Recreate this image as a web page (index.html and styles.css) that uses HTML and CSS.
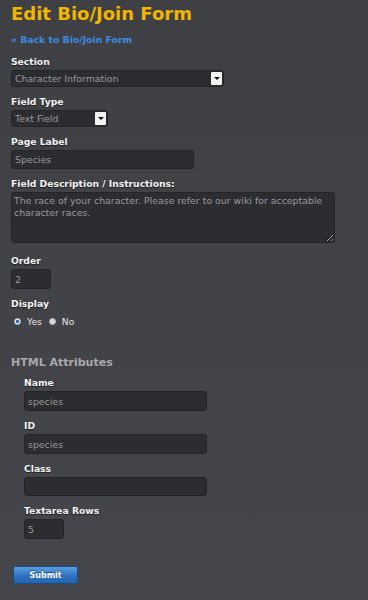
FILE: index.html
```html
<!DOCTYPE html>
<html lang="en">
<head>
  <meta charset="UTF-8">
  <meta name="viewport" content="width=device-width, initial-scale=1.0">
  <title>Edit Bio/Join Form</title>
  <link rel="stylesheet" href="styles.css">
</head>
<body>
  <div class="page">
    <!-- Heading -->
    <h1>Edit Bio/Join Form</h1>
    <a class="back-link" href="#">&laquo; Back to Bio/Join Form</a>

    <form class="field-form">
      <div class="form-group">
        <label for="section">Section</label>
        <div class="select-wrap select-wide">
          <select id="section">
            <option>Character Information</option>
          </select>
          <span class="select-arrow"></span>
        </div>
      </div>

      <div class="form-group">
        <label for="fieldType">Field Type</label>
        <div class="select-wrap select-short">
          <select id="fieldType">
            <option>Text Field</option>
          </select>
          <span class="select-arrow"></span>
        </div>
      </div>

      <div class="form-group">
        <label for="pageLabel">Page Label</label>
        <input type="text" id="pageLabel" class="input-medium" value="Species">
      </div>

      <div class="form-group form-group-wide">
        <label for="description">Field Description / Instructions:</label>
        <textarea id="description" class="input-large">The race of your character. Please refer to our wiki for acceptable character races.</textarea>
      </div>

      <div class="form-group">
        <label for="order">Order</label>
        <input type="text" id="order" class="input-mini input-tall" value="2">
      </div>

      <div class="form-group">
        <label>Display</label>
        <div class="radio-row">
          <label class="radio"><input type="radio" name="display" checked> Yes</label>
          <label class="radio"><input type="radio" name="display"> No</label>
        </div>
      </div>

      <!-- HTML attributes -->
      <h2>HTML Attributes</h2>
      <div class="attributes">
        <div class="form-group">
          <label for="attrName">Name</label>
          <input type="text" id="attrName" class="input-medium input-tall" value="species">
        </div>
        <div class="form-group">
          <label for="attrId">ID</label>
          <input type="text" id="attrId" class="input-medium input-tall" value="species">
        </div>
        <div class="form-group">
          <label for="attrClass">Class</label>
          <input type="text" id="attrClass" class="input-medium" value="">
        </div>
        <div class="form-group">
          <label for="attrRows">Textarea Rows</label>
          <input type="text" id="attrRows" class="input-mini input-tall" value="5">
        </div>
      </div>

      <button type="submit" class="submit-button">Submit</button>
    </form>
  </div>
</body>
</html>
```

FILE: styles.css
```css
html,
body {
  margin: 0;
  padding: 0;
  height: 100%;
}

body {
  font-family: 'DejaVu Sans', Verdana, sans-serif;
  font-size: 9px;
  color: #eee;
  background: linear-gradient(180deg, #3f4044, #45464b);
}

.page {
  padding: 3px 11px 0;
}

h1 {
  margin: 0;
  font-size: 18px;
  font-weight: bold;
  color: #f2b600;
  line-height: 22px;
}

.back-link {
  display: block;
  margin-top: 9px;
  font-size: 9.3px;
  font-weight: bold;
  color: #3b8de2;
  text-decoration: none;
}

.field-form {
  margin-top: 11px;
}

.form-group {
  margin-bottom: 9px;
}

.form-group-wide {
  margin-bottom: 12px;
}

.form-group > label {
  display: block;
  margin-bottom: 3px;
  font-size: 9.2px;
  font-weight: bold;
  color: #f4f4f4;
  text-shadow: 0 1px 1px #1c1c1c;
}

input[type="text"],
select,
textarea {
  box-sizing: border-box;
  font-family: 'DejaVu Sans', Verdana, sans-serif;
  font-size: 9.4px;
  color: #9a9a9a;
  background: #2b2d31;
  border: 1px solid #242528;
  border-radius: 3px;
  padding: 0 3px;
  outline: none;
}

input[type="text"] {
  height: 19px;
}

input.input-tall {
  height: 20px;
}

.input-medium {
  width: 183px;
}

.input-mini {
  width: 40px;
}

.input-large {
  display: block;
  width: 324px;
  height: 51px;
  padding: 2px 2px;
  line-height: 12px;
}

.select-wrap {
  position: relative;
  height: 17px;
}

.select-wide {
  width: 213px;
}

.select-short {
  width: 97px;
}

.select-wrap select {
  appearance: none;
  width: 100%;
  height: 100%;
}

.select-arrow {
  position: absolute;
  top: 2px;
  right: 2px;
  width: 11px;
  height: 13px;
  background: #f2f2f2;
  border-radius: 1px;
  pointer-events: none;
}

.select-arrow::after {
  content: "";
  position: absolute;
  left: 3px;
  top: 5px;
  border-left: 3px solid transparent;
  border-right: 3px solid transparent;
  border-top: 3px solid #111;
}

.radio-row {
  display: flex;
  align-items: center;
  gap: 7px;
  padding: 4px 0 0 3px;
}

.radio {
  display: flex;
  align-items: center;
  gap: 4px;
  font-size: 9.2px;
  color: #e4e4e4;
}

.radio input {
  appearance: none;
  margin: 0 2px 0 0;
  width: 7px;
  height: 7px;
  border-radius: 50%;
  background: #d8d8d8;
  border: 1px solid #bdbdbd;
}

.radio input:checked {
  background: radial-gradient(circle, #2d6fb3 0 1.6px, #f0f0f0 2px);
}

h2 {
  margin: 29px 0 8px;
  font-size: 11px;
  font-weight: bold;
  color: #a9a9ad;
}

.attributes {
  padding-left: 13px;
}

.submit-button {
  display: block;
  margin: 27px 0 0 2px;
  width: 65px;
  height: 18px;
  font-family: 'DejaVu Sans', Verdana, sans-serif;
  font-size: 8px;
  font-weight: bold;
  color: #fff;
  text-shadow: 0 -1px 0 #1e4f8a;
  background: linear-gradient(180deg, #5b9fe3, #2f72c0 55%, #2563ad);
  border: 1px solid #1d4c85;
  border-radius: 2px;
  cursor: pointer;
}
```
